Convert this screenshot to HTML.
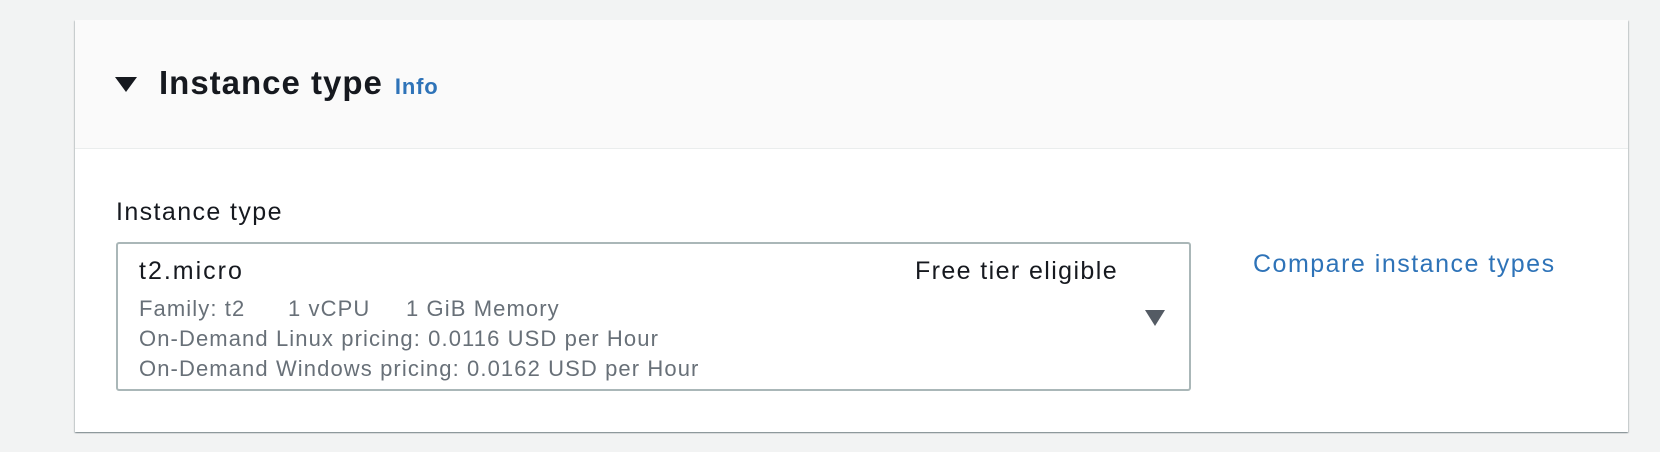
<!DOCTYPE html>
<html><head><style>
body{margin:0;width:1660px;height:452px;background:#f2f3f3;font-family:"Liberation Sans",sans-serif;position:relative;overflow:hidden}
.card{position:absolute;left:75px;top:20px;width:1553px;height:412px;background:#fff;box-shadow:0 1px 1px rgba(0,28,36,.3),1px 1px 1px rgba(0,28,36,.15),-1px 1px 1px rgba(0,28,36,.15)}
.hdr{position:absolute;left:0;top:0;right:0;height:128px;background:#fafafa;border-bottom:1px solid #eaeded}
.tri{position:absolute;left:40px;top:57px;width:0;height:0;border-left:11px solid transparent;border-right:11px solid transparent;border-top:15px solid #16191f}
.title{position:absolute;left:84px;top:44px;font-size:33px;letter-spacing:1px;font-weight:bold;color:#16191f;white-space:nowrap}
.title span{font-size:22px;letter-spacing:.8px;color:#2e73b8;margin-left:12px}
.lbl{position:absolute;left:41px;top:178px;font-size:25px;letter-spacing:1.4px;color:#16191f}
.sel{position:absolute;left:41px;top:222px;width:1075px;height:149px;border:2px solid #aab7b8;border-radius:3px;box-sizing:border-box}
.t{position:absolute;left:21px;top:13px;font-size:25px;letter-spacing:2px;color:#16191f}
.g{position:absolute;left:21px;font-size:22px;letter-spacing:1.1px;color:#687078;white-space:nowrap}
.free{position:absolute;right:71px;top:13px;font-size:25px;letter-spacing:1.4px;color:#16191f}
.arr{position:absolute;left:1027px;top:66px;border-left:10px solid transparent;border-right:10px solid transparent;border-top:16px solid #545b64}
.cmp{position:absolute;left:1178px;top:230px;font-size:25px;letter-spacing:1.5px;color:#2e73b8;white-space:nowrap}
</style></head><body>
<div class="card">
 <div class="hdr"><div class="tri"></div><div class="title">Instance type<span>Info</span></div></div>
 <div class="lbl">Instance type</div>
 <div class="sel">
  <div class="t">t2.micro</div>
  <div class="g" style="top:52px">Family: t2</div>
  <div class="g" style="top:52px;left:170px">1 vCPU</div>
  <div class="g" style="top:52px;left:288px">1 GiB Memory</div>
  <div class="g" style="top:82px">On-Demand Linux pricing: 0.0116 USD per Hour</div>
  <div class="g" style="top:112px">On-Demand Windows pricing: 0.0162 USD per Hour</div>
  <div class="free">Free tier eligible</div>
  <div class="arr"></div>
 </div>
 <div class="cmp">Compare instance types</div>
</div>
</body></html>
